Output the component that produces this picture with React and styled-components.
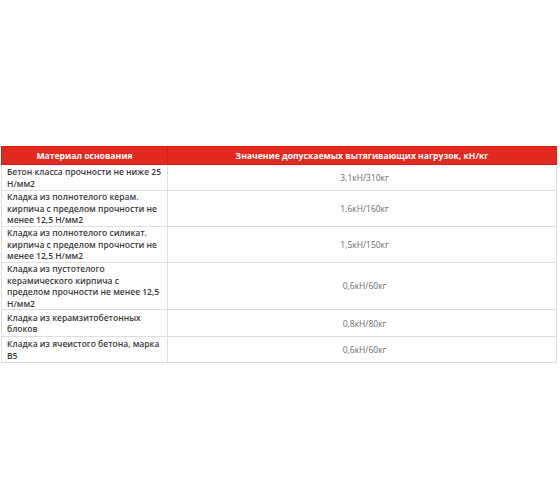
import React from "react";
import styled, { createGlobalStyle } from "styled-components";

const GlobalStyle = createGlobalStyle`
  html, body {
    margin: 0;
    padding: 0;
    background: #ffffff;
  }
  body {
    font-family: "Open Sans", "Noto Sans", sans-serif;
  }
`;

const Page = styled.div`
  width: 560px;
  height: 504px;
  padding: 146px 3px 0 1px;
  box-sizing: border-box;
`;

const Table = styled.table`
  width: 556px;
  border-collapse: collapse;
  table-layout: fixed;
`;

const HeadCell = styled.th`
  background: #e2291f;
  color: #ffffff;
  font-size: 8.6px;
  font-weight: 700;
  height: 17px;
  padding: 0 4px;
  text-align: center;
  border: 1px solid #d22018;
  border-left-color: ${(p) => (p.$first ? "#d22018" : "#f3a19b")};
  white-space: nowrap;
`;

const Cell = styled.td`
  border: 1px solid #dedede;
  padding: 0 0 0 5px;
  font-size: 8.5px;
  line-height: 11.6px;
  height: ${(p) => p.$h}px;
  box-sizing: border-box;
  vertical-align: middle;
  white-space: nowrap;
  color: ${(p) => (p.$value ? "#6b6b6b" : "#3a3a3a")};
  font-weight: ${(p) => (p.$value ? 400 : 600)};
  text-align: ${(p) => (p.$value ? "center" : "left")};
`;

const Line = styled.div`
  display: block;
`;

const rows = [
  { lines: ["Бетон класса прочности не ниже 25", "Н/мм2"], value: "3,1кН/310кг", h: 26 },
  { lines: ["Кладка из полнотелого керам.", "кирпича с пределом прочности не", "менее 12,5 Н/мм2"], value: "1,6кН/160кг", h: 36 },
  { lines: ["Кладка из полнотелого силикат.", "кирпича с пределом прочности не", "менее 12,5 Н/мм2"], value: "1,5кН/150кг", h: 36 },
  { lines: ["Кладка из пустотелого", "керамического кирпича с", "пределом прочности не менее 12,5", "Н/мм2"], value: "0,6кН/60кг", h: 46 },
  { lines: ["Кладка из керамзитобетонных", "блоков"], value: "0,8кН/80кг", h: 27 },
  { lines: ["Кладка из ячеистого бетона, марка", "B5"], value: "0,6кН/60кг", h: 26 },
];

export default function App() {
  return (
    <>
      <GlobalStyle />
      <Page>
        <Table>
          <colgroup>
            <col style={{ width: "166px" }} />
            <col />
          </colgroup>
          <thead>
            <tr>
              <HeadCell $first>Материал основания</HeadCell>
              <HeadCell>Значение допускаемых вытягивающих нагрузок, кН/кг</HeadCell>
            </tr>
          </thead>
          <tbody>
            {rows.map((r) => (
              <tr key={r.lines[0] + r.value}>
                <Cell $h={r.h}>
                  {r.lines.map((l) => (
                    <Line key={l}>{l}</Line>
                  ))}
                </Cell>
                <Cell $h={r.h} $value>{r.value}</Cell>
              </tr>
            ))}
          </tbody>
        </Table>
      </Page>
    </>
  );
}
